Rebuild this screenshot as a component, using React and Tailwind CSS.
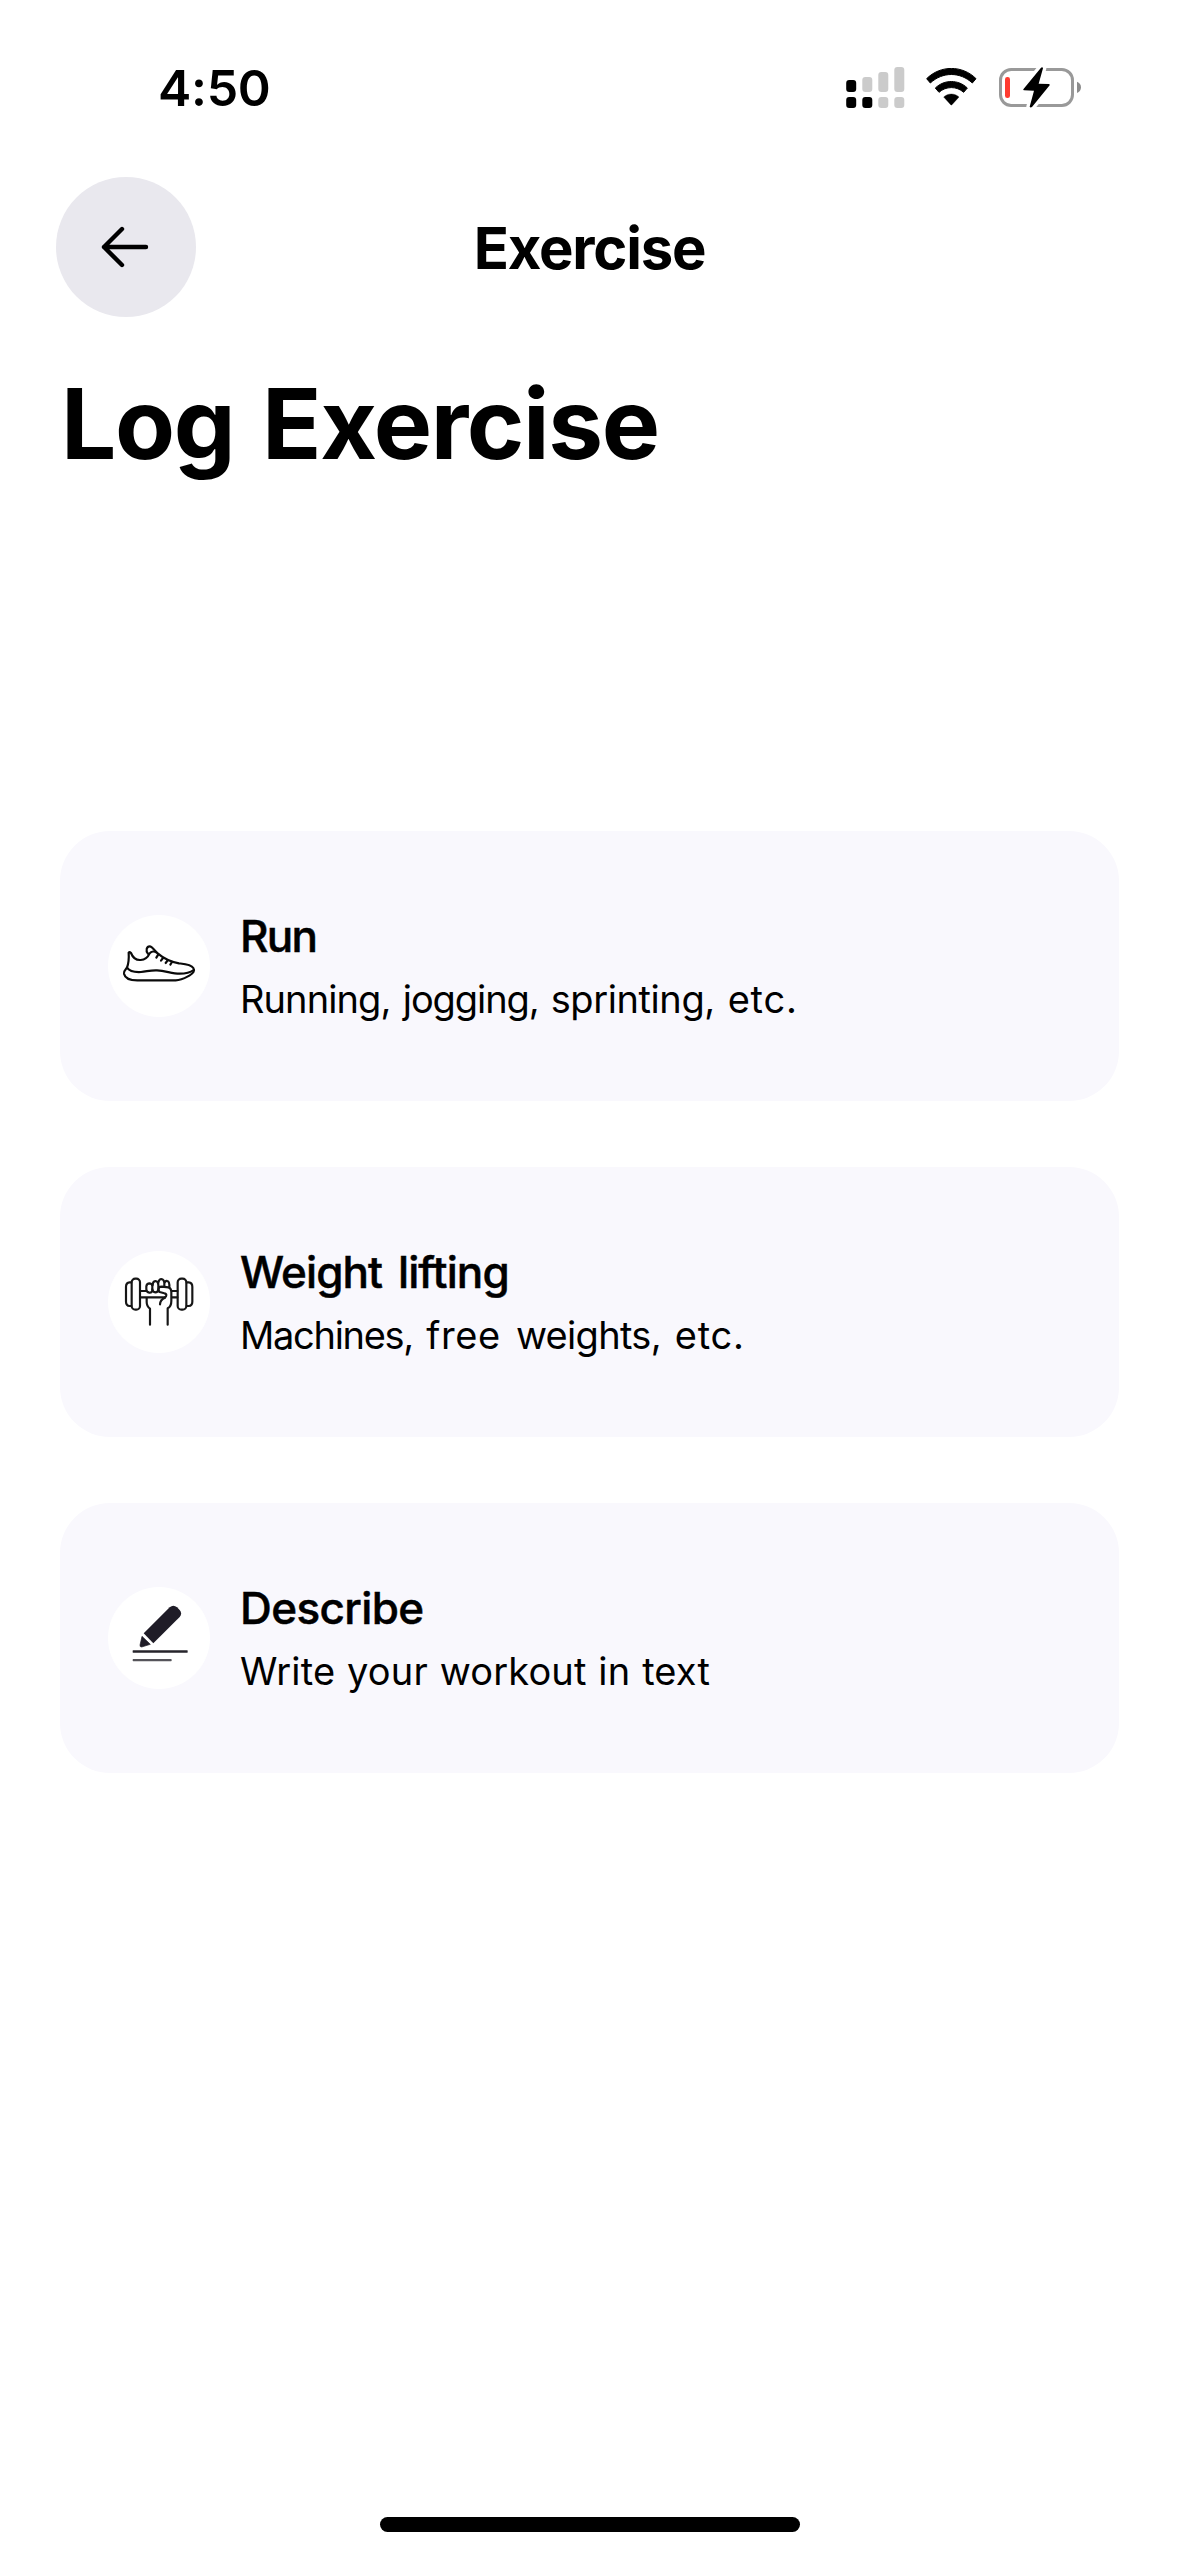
function SignalIcon() {
  return (
    <svg className="h-[42px] w-[60px]" viewBox="0 0 60 42">
      <g fill="#cbcbcb">
        <rect x="16.3" y="11" width="10" height="15" rx="3" />
        <rect x="32.3" y="6" width="10" height="20" rx="3" />
        <rect x="48.3" y="1" width="10" height="25" rx="3" />
        <rect x="32.3" y="31" width="10" height="11" rx="3" />
        <rect x="48.3" y="31" width="10" height="11" rx="3" />
      </g>
      <rect x="0.2" y="14" width="10" height="12" rx="3" />
      <rect x="0.2" y="31" width="10" height="11" rx="3" />
      <rect x="16.3" y="31" width="10" height="11" rx="3" />
    </svg>
  );
}

function WifiIcon() {
  return (
    <svg className="h-[38px] w-[51px]" viewBox="318 56 153 114">
      <path d="M320 88 C361 47 427 47 468 88 L457 101 C420 67 368 67 331 101 Z" stroke="#000" strokeWidth="3" strokeLinejoin="round" />
      <path d="M346 116 C373 90 415 90 442 116 L431 129 C410 110 378 110 357 129 Z" stroke="#000" strokeWidth="3" strokeLinejoin="round" />
      <path d="M371 143 C384 131 404 131 417 143 L396 166 Q394 168.500 392 166 Z" stroke="#000" strokeWidth="1" strokeLinejoin="round" />
    </svg>
  );
}

function BatteryIcon() {
  return (
    <svg className="h-[42px] w-[84px]" viewBox="534 48 252 126">
      <rect x="541.500" y="58.500" width="216" height="108" rx="32" fill="none" stroke="#999" strokeWidth="9" />
      <path d="M771 95 Q783 100 783 111.500 Q783 123 771 129 Z" fill="#8c8c8c" />
      <rect x="555" y="81" width="15" height="63" rx="7" fill="#ff3b30" />
      <path
        d="M663 53 L610 118 Q609 121 612 121 L642 122 L629 170 Q631 174 636 171 L689 106 Q690 102 686 102 L656 101 L669 55 Q668 50 663 53 Z"
        stroke="#fff"
        strokeWidth="20"
        paintOrder="stroke"
        strokeLinejoin="round"
      />
    </svg>
  );
}

function ShoeIcon() {
  return (
    <svg className="size-full" viewBox="9 15 306 306" fill="none" stroke="#0a0a0a" strokeWidth="6.500" strokeLinecap="round" strokeLinejoin="round">
      <path d="M71 128 Q74 124 78 129 C83 142 93 151 107 150 C122 149 129 141 134 130 C139 123 148 123 155 128 C174 144 196 156 222 160 C240 162 258 163 265 174 C271 183 264 190 254 196 C238 205 230 211 212 211 L97 211 C76 211 60 205 57 191 C56 183 62 178 66 173 C71 160 72 144 71 128 Z" />
      <path d="M66 173 C72 182 90 187 108 186 C127 184 138 180 156 181 C183 183 202 191 224 191 C241 191 258 186 266 180" />
      <path d="M129 131 C121 122 125 109 134 109 C140 109 147 118 154 126" />
      <path d="M160 133 L154 143 M174 144 L168 152 M188 151 L182 159 M201 156 L196 164" />
    </svg>
  );
}

function DumbbellIcon() {
  return (
    <svg className="size-full" viewBox="9 15 306 306" fill="none" stroke="#161616" strokeWidth="6.500" strokeLinecap="round" strokeLinejoin="round">
      <rect x="80" y="98" width="25" height="93" rx="11" />
      <rect x="218" y="98" width="26" height="93" rx="11" />
      <path d="M79 109 H74 Q63 110 63 122 V167 Q63 179 74 180 H79" />
      <path d="M245 109 H251 Q262 110 262 122 V167 Q262 179 251 180 H245" />
      <path d="M106 135 H122 M106 154 H180 M201 135 H217 M201 154 H217" />
      <path d="M180 154 Q184 153 184 147 Q184 143 178 142 L164 138 Q158 134 162 125 Q164 122 171 122 L190 124 Q199 126 199 139 V165 Q199 182 188 187 V236" />
      <path d="M125 156 V168 Q125 181 135 188 V236" />
      <path d="M142 135 Q139 141 133 140 Q124 139 124 130 V121 Q125 112 134 112 Q142 113 142 121 Z" />
      <path d="M143 118 Q143 106 151 105 Q160 106 160 117 V130 Q159 139 151 139 Q143 138 142 130" />
      <path d="M160 110 Q162 99 169 99 Q177 100 178 110 V121 M178 112 Q181 103 187 105 Q194 107 193 124" />
      <path d="M180 155 Q166 160 165 175" />
    </svg>
  );
}

function PencilIcon() {
  return (
    <svg className="size-full" viewBox="9 15 306 306" fill="#1f1c27">
      <path d="M116 154 L194 76 Q205 66 216 76 L224 84 Q233 94 224 105 L145 184 Z" />
      <path d="M111 163 L136 187 L110 195 Q104 195 105 189 Z" stroke="#1f1c27" strokeWidth="2" strokeLinejoin="round" />
      <rect x="83" y="205" width="165" height="7" rx="1" fill="#26242b" />
      <rect x="83" y="231" width="117" height="6.500" rx="2" fill="#55545a" />
    </svg>
  );
}

const options = [
  {
    title: "Run",
    titleStyle: "tracking-[-1.8px]",
    detail: (
      <span className="[word-spacing:2.5px]">
        <span className="tracking-[-0.9px]">Running, </span>
        <span className="tracking-[-1.1px]">jogging, </span>
        <span className="tracking-[-0.4px]">sprinting, </span>
        <span className="tracking-[0.8px]">etc.</span>
      </span>
    ),
    Icon: ShoeIcon,
  },
  {
    title: "Weight lifting",
    titleStyle: "tracking-[-0.9px] [word-spacing:5px]",
    detail: (
      <span className="[word-spacing:3.9px]">
        <span className="tracking-[-1.3px]">Machines, </span>
        <span className="tracking-[0.6px]">free </span>
        <span className="tracking-[-0.7px]">weights, </span>
        <span className="tracking-[0.8px]">etc.</span>
      </span>
    ),
    Icon: DumbbellIcon,
  },
  {
    title: "Describe",
    titleStyle: "tracking-[-0.6px]",
    detail: <span className="tracking-[0.15px] [word-spacing:1px]">Write your workout in text</span>,
    Icon: PencilIcon,
  },
];

export default function App() {
  return (
    <div className="flex h-[2556px] w-[1179px] flex-col bg-white font-['Inter',sans-serif] text-black">
      <header className="flex h-[177px] shrink-0 items-start justify-between pt-[66px] pr-[97px] pl-[158px]">
        <span className="mt-[-8px] text-[50px] leading-[60px] font-semibold tracking-[-0.3px]">4:50</span>
        <div className="flex items-start">
          <SignalIcon />
          <div className="ml-[20px] pt-[2px]"><WifiIcon /></div>
          <div className="ml-[21px]"><BatteryIcon /></div>
        </div>
      </header>

      <nav className="grid h-[140px] shrink-0 grid-cols-[140px_1fr_140px] items-center px-14">
        <button aria-label="Back" className="flex size-[140px] items-center justify-center rounded-full bg-[#e9e8ee]">
          <svg className="h-[42px] w-[50px]" viewBox="0 0 50 42" fill="none" stroke="#000" strokeWidth="4.400" strokeLinecap="round" strokeLinejoin="round">
            <path d="M45 21 H3 M21 3 L3 21 L21 39" />
          </svg>
        </button>
        <h2 className="pt-[2px] text-center text-[58px] leading-[70px] font-bold tracking-[-1.2px]">Exercise</h2>
      </nav>

      <h1 className="mt-[47px] pl-[61px] text-[98px] leading-[120px] font-bold tracking-[-1.4px] [word-spacing:6px]">Log Exercise</h1>

      <main className="mt-[347px] flex flex-col gap-[66px] px-[60px]">
        {options.map(({ title, detail, Icon, titleStyle }) => (
          <button key={title} className="flex h-[270px] items-center rounded-[50px] bg-[#f9f8fd] pl-12 text-left">
            <span className="size-[102px] shrink-0 rounded-full bg-white"><Icon /></span>
            <span className="ml-[30px] flex flex-col items-start pt-[2px]">
              <span className={`text-[44px] leading-[64px] font-medium [-webkit-text-stroke:0.5px_black] ${titleStyle}`}>{title}</span>
              <span className="text-[38px] leading-[62px]">{detail}</span>
            </span>
          </button>
        ))}
      </main>

      <div className="mx-auto mt-auto mb-6 h-[15px] w-[420px] shrink-0 rounded-full bg-black" />
    </div>
  );
}
